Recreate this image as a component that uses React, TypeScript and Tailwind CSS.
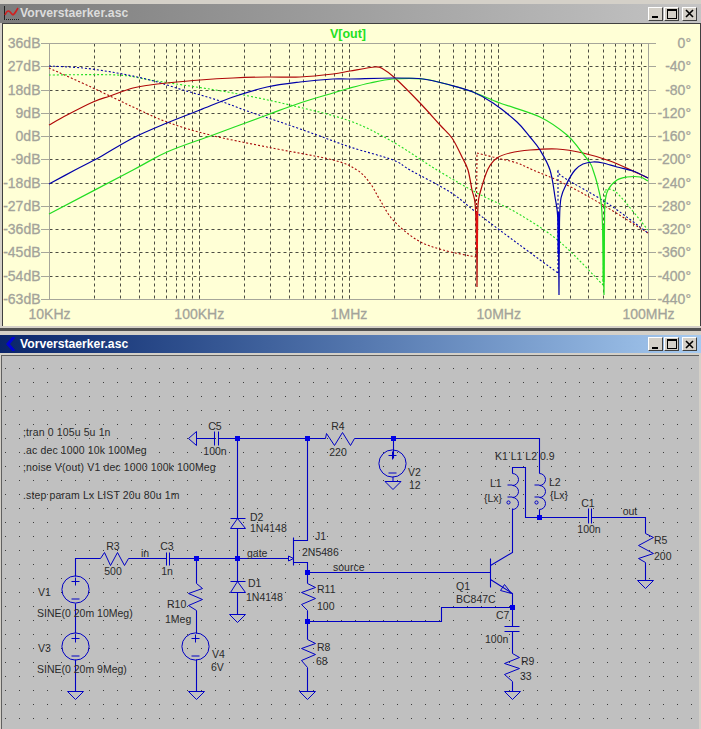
import type { ReactNode } from "react";

const FONT = "'Liberation Sans', Arial, sans-serif";

const DB_LABELS = ["36dB", "27dB", "18dB", "9dB", "0dB", "-9dB", "-18dB", "-27dB", "-36dB", "-45dB", "-54dB", "-63dB"];
const DEG_LABELS = ["0°", "-40°", "-80°", "-120°", "-160°", "-200°", "-240°", "-280°", "-320°", "-360°", "-400°", "-440°"];
const FREQ_LABELS = ["10KHz", "100KHz", "1MHz", "10MHz", "100MHz"];

const PLOT_L = 49.5;
const PLOT_R = 648.5;
const PLOT_T = 43.5;
const PLOT_B = 299.5;
const ROW = (PLOT_B - PLOT_T) / 11;
const DECADE = (PLOT_R - PLOT_L) / 4;

const gridX: number[] = [];
for (let d = 0; d < 4; d++) {
  for (let k = 1; k <= 10; k++) {
    if (k === 1 && d === 0) continue;
    gridX.push(Math.floor(PLOT_L + DECADE * (d + Math.log10(k))) + 0.5);
  }
}

const RED_MAG = "49,125 67,115 93,102 110,96 133,88 150,85 167,83 200,80 233,78 267,77 300,77 333,74 350,71 375,67 383,69 395,78 420,103 440,125 452,138 462,157 468,170 472,190 475,203 476.5,235 477,287 | 477,287 477.5,235 478,205 480,193 488,169 497,158 510,153 530,150 557,149 583,153 610,161 633,171 648,178";
const BLUE_MAG = "49,184 75,170 100,157 133,138 167,123 200,110 233,97 267,87 300,82 333,79 350,79 393,78 423,79 450,85 473,92 493,103 517,122 530,137 540,150 550,170 555,197 558,222 559,295 | 559,295 559.5,222 561,198 567,183 575,170 583,164 593,162 603,163 617,167 633,171 648,178";
const GREEN_MAG = "49,214 133,170 167,152 213,135 267,115 300,103 333,93 350,88 370,83 393,79 423,79 450,85 473,92 500,103 540,117 567,135 580,150 590,163 593,170 598,187 602,213 604,295 | 604,295 604.5,225 605,203 608,190 617,180 627,177 640,177 648,181";
const RED_PH = "49,68 93,88 133,107 167,122 210,135 267,147 333,160 357,170 370,183 380,200 393,220 417,240 443,250 476,257 | 476,257 477,153 | 477,153 493,157 517,163 533,170 563,183 603,205 648,233";
const BLUE_PH = "49,66 83,68 117,73 150,80 183,90 217,100 250,112 283,123 317,135 350,147 393,160 410,170 450,192 477,213 517,243 558,273 | 558,273 558,170 | 558,170 563,177 607,203 648,233";
const GREEN_PH = "49,75 117,75 150,80 183,85 233,93 290,105 350,121 393,142 437,170 477,193 517,213 560,242 603,285 | 603,285 605,190 | 605,190 617,193 648,230";

// smooth the hand-read samples; " | " marks a corner where the curve must stay sharp
function curve(points: string) {
  return points
    .split(" | ")
    .map((seg) => {
      const p = seg.split(" ").map((s) => s.split(",").map(Number));
      let d = `M${p[0][0]} ${p[0][1]}`;
      for (let i = 0; i < p.length - 1; i++) {
        const a = p[Math.max(i - 1, 0)];
        const b = p[i];
        const c = p[i + 1];
        const e = p[Math.min(i + 2, p.length - 1)];
        d += `C${b[0] + (c[0] - a[0]) / 6} ${b[1] + (c[1] - a[1]) / 6} ${c[0] - (e[0] - b[0]) / 6} ${c[1] - (e[1] - b[1]) / 6} ${c[0]} ${c[1]}`;
      }
      return d;
    })
    .join("");
}

function Plot() {
  return (
    <svg className="block h-[302px] w-[697px]" viewBox="3 24 697 302" style={{ fontFamily: FONT }}>
      <rect x="3" y="24" width="697" height="302" fill="#ffffd6" />
      {DB_LABELS.map((_, i) =>
        i > 0 && i < 11 ? (
          <line key={i} x1={PLOT_L} x2={PLOT_R} y1={Math.floor(PLOT_T + i * ROW) + 0.5} y2={Math.floor(PLOT_T + i * ROW) + 0.5} stroke="#4c4c42" strokeDasharray="3 3" />
        ) : null
      )}
      {gridX.slice(0, -1).map((x) => (
        <line key={x} x1={x} x2={x} y1={PLOT_T} y2={PLOT_B} stroke="#4c4c42" strokeDasharray="3 3" />
      ))}
      <rect x={PLOT_L} y={PLOT_T} width={PLOT_R - PLOT_L} height={PLOT_B - PLOT_T} fill="none" stroke="#a6a69a" />
      {DB_LABELS.map((t, i) => {
        const y = Math.floor(PLOT_T + i * ROW) + 0.5;
        return (
          <g key={t}>
            <line x1="41" x2={PLOT_L} y1={y} y2={y} stroke="#a6a69a" />
            <line x1={PLOT_R} x2="656" y1={y} y2={y} stroke="#a6a69a" />
            <text x="40.5" y={y + 4} textAnchor="end" fontSize="14" fill="#a3a39a" stroke="#a3a39a" strokeWidth="0.3">{t}</text>
            <text x="691" y={y + 4} textAnchor="end" fontSize="14" fill="#a3a39a" stroke="#a3a39a" strokeWidth="0.3">{DEG_LABELS[i]}</text>
          </g>
        );
      })}
      {FREQ_LABELS.map((t, i) => (
        <text key={t} x={PLOT_L + i * DECADE} y="319" textAnchor="middle" fontSize="14" fill="#a3a39a" stroke="#a3a39a" strokeWidth="0.3">{t}</text>
      ))}
      <text x="348" y="38" textAnchor="middle" fontSize="12.5" fontWeight="700" fill="#22e022">V[out]</text>

      <g fill="none" strokeLinejoin="round">
        <path d={curve(RED_PH)} stroke="#a80808" strokeWidth="1.1" strokeDasharray="2 2" />
        <path d={curve(GREEN_PH)} stroke="#22dd22" strokeWidth="1.1" strokeDasharray="2 2" />
        <path d={curve(BLUE_PH)} stroke="#0000a8" strokeWidth="1.1" strokeDasharray="2 2" />
        <path d={curve(RED_MAG)} stroke="#b00808" strokeWidth="1.2" />
        <path d={curve(GREEN_MAG)} stroke="#22dd22" strokeWidth="1.2" />
        <path d={curve(BLUE_MAG)} stroke="#0000a8" strokeWidth="1.2" />
        {/* the dips overlap into a heavier stroke */}
        <path d="M477 212V248" stroke="#e01010" strokeWidth="2" />
        <path d="M558.5 212V254" stroke="#0000d0" strokeWidth="2" />
        <path d="M603.5 225V282" stroke="#22e022" strokeWidth="2" />
      </g>
    </svg>
  );
}

function Gnd({ x, y }: { x: number; y: number }) {
  return <polygon points={`${x - 8},${y} ${x + 8},${y} ${x},${y + 8}`} fill="none" />;
}

function Source({ x, y }: { x: number; y: number }) {
  return (
    <g>
      <circle cx={x} cy={y} r="13.6" fill="none" />
      <path d={`M${x - 4} ${y - 8}h8M${x} ${y - 12}v8M${x - 4} ${y + 9.5}h8`} fill="none" />
    </g>
  );
}

function Coil({ x, y }: { x: number; y: number }) {
  return (
    <path
      d={`M${x} ${y}a6 6 0 0 1 6 6a6 6 0 0 1 -6 6a6 6 0 0 1 6 6a6 6 0 0 1 -6 6a6 6 0 0 1 6 6a6 6 0 0 1 -6 6M${x - 5} ${y + 11.5}h5M${x - 5} ${y + 23.5}h5`}
      fill="none"
    />
  );
}

const RESISTORS = [
  "100,558 104,552 110,565 117,552 124,565 128,558",
  "325,438 326,433 334,445 342,432 350,445 354,438",
  "196,583 202,588 188,593 202,599 188,605 196,610",
  "307,583 315,587 301,592 315,598 301,604 307,610",
  "307,639 315,643 301,648 315,654 301,660 307,667",
  "512,653 519,657 504,663 519,668 504,674 512,681",
  "645,533 653,537 638,545 653,553 638,558 645,562",
];

const WIRES = [
  // top rail and the flag at the C5 end
  "M196 438H214M218 438H325M354 438H539V473",
  "M393 438V458",
  "M237 438V518M237 528V581M237 592V614",
  "M307 438V540H293M293 537V565M293 562H307V583",
  // input side
  "M75 576V558H100M128 558H166M169 558H293M196 558V583M196 610V633M196 659V691",
  "M75 603V633M75 659V691",
  // source and feedback
  "M307 572H490M307 610V639M307 667V691M307 621H441V607H512",
  // transistor, coils, output
  "M490 558V587M490 565L512 552V508M490 579L512 593V626M512 631V653M512 681V691",
  "M512 473V467H525V517H587M591 517H645V533M645 562V580",
  "M539 509V517",
];

const JUNCTIONS: [number, number][] = [[237, 438], [307, 438], [393, 438], [196, 558], [237, 558], [307, 572], [307, 621], [512, 607], [539, 517]];

const DIRECTIVES: [string, number][] = [
  [";tran 0 105u 5u 1n", 432],
  [".ac dec 1000 10k 100Meg", 450],
  [";noise V(out) V1 dec 1000 100k 100Meg", 467],
  [".step param Lx LIST 20u 80u 1m", 495],
];

const LEFT_LABELS: [string, number, number][] = [
  ["V1", 38, 592],
  ["SINE(0 20m 10Meg)", 37, 613],
  ["V3", 38, 648],
  ["SINE(0 20m 9Meg)", 37, 669],
  ["R10", 167, 604],
  ["1Meg", 165, 619],
  ["V4", 212, 654],
  ["6V", 211, 667],
  ["D2", 250, 517],
  ["1N4148", 250, 528],
  ["D1", 248, 583],
  ["1N4148", 246, 597],
  ["J1", 315, 536],
  ["2N5486", 302, 552],
  ["gate", 247, 553],
  ["source", 333, 567],
  ["V2", 408, 472],
  ["12", 409, 485],
  ["R11", 317, 589],
  ["100", 317, 606],
  ["R8", 317, 647],
  ["68", 316, 661],
  ["Q1", 456, 586],
  ["BC847C", 456, 599],
  ["C7", 496, 615],
  ["100n", 485, 639],
  ["R9", 521, 661],
  ["33", 520, 676],
  ["K1 L1 L2 0.9", 495, 456],
  ["L1", 490, 483],
  ["{Lx}", 484, 498],
  ["L2", 549, 482],
  ["{Lx}", 550, 495],
  ["R5", 654, 540],
  ["200", 654, 556],
];

const CENTER_LABELS: [string, number, number][] = [
  ["C5", 215, 426],
  ["100n", 215, 451],
  ["R4", 338, 426],
  ["220", 338, 452],
  ["R3", 113, 546],
  ["500", 113, 571],
  ["in", 145, 553],
  ["C3", 167, 546],
  ["1n", 167, 571],
  ["C1", 588, 503],
  ["100n", 589, 529],
  ["out", 630, 511],
];

function Schematic() {
  return (
    <svg className="block h-[373px] w-[697px]" viewBox="2 356 697 373" style={{ fontFamily: FONT }}>
      <defs>
        <pattern id="dots" x="5" y="410" width="14" height="14" patternUnits="userSpaceOnUse">
          <rect width="1" height="1" fill="#3c3c3c" />
        </pattern>
      </defs>
      <rect x="2" y="356" width="697" height="373" fill="#c0c0c0" />
      <rect x="2" y="356" width="697" height="373" fill="url(#dots)" />

      <g stroke="#0000c4" strokeWidth="1.1" fill="none" transform="translate(0.5 0.5)">
        {WIRES.map((d) => (
          <path key={d} d={d} />
        ))}
        {RESISTORS.map((p) => (
          <polyline key={p} points={p} strokeWidth="1" />
        ))}
        <g strokeWidth="1">
          {/* capacitors */}
          <path d="M214 431V445M218 431V445M166 552V565M169 552V565M588 508V523M591 508V523M504 626H519M504 631H519" />
          {/* C5 flag */}
          <polygon points="188,438 196,431 196,445" />
          <Gnd x={75} y={691} />
          <Gnd x={196} y={691} />
          <Gnd x={237} y={614} />
          <Gnd x={307} y={691} />
          <Gnd x={512} y={691} />
          <Gnd x={645} y={580} />
          <Gnd x={392.5} y={481} />
          <path d="M392.5 476V481" />
          <Source x={75} y={589} />
          <Source x={75} y={646} />
          <Source x={195} y={646} />
          <Source x={392} y={463} />
          {/* diodes */}
          <path d="M230 518H245M237 518L230 528H245ZM230 581H245M237 581L230 592H245Z" />
          {/* gate and emitter arrows */}
          <polygon points="293,558 288,555.5 288,560.5" fill="#c0c0c0" />
          <polygon points="511,593 500,590 504,584" />
          <Coil x={512} y={473} />
          <Coil x={539} y={473} />
          <circle cx="508" cy="502" r="1.6" />
          <circle cx="536" cy="502" r="1.6" />
        </g>
      </g>
      {JUNCTIONS.map(([x, y]) => (
        <rect key={`${x}-${y}`} x={x - 2} y={y - 2} width="5" height="5" fill="#0000e6" />
      ))}
      <g fontSize="10.5" fill="#2a2a2a">
        {DIRECTIVES.map(([t, y]) => (
          <text key={t} x={23} y={y + 4} letterSpacing="0.13">{t}</text>
        ))}
        {LEFT_LABELS.map(([t, x, y]) => (
          <text key={`${t}-${x}-${y}`} x={x} y={y + 4}>{t}</text>
        ))}
        {CENTER_LABELS.map(([t, x, y]) => (
          <text key={`${t}-${x}-${y}`} x={x} y={y + 4} textAnchor="middle">{t}</text>
        ))}
      </g>
    </svg>
  );
}

function WaveIcon() {
  return (
    <svg className="h-[15px] w-[15px] shrink-0" viewBox="0 0 15 15">
      <path d="M0.5 0V13" stroke="#222" />
      <path d="M0 13.5H15" stroke="#222" strokeDasharray="1 1" />
      <path d="M1 9C3 4 5 4 7 7S10 9 14 2" stroke="#d02020" strokeWidth="1.6" fill="none" />
    </svg>
  );
}

function SchematicIcon() {
  return (
    <svg className="h-[14px] w-[12px] shrink-0" viewBox="0 0 12 14">
      <path d="M9 0L3 7L9 14" stroke="#0000d8" strokeWidth="3" fill="none" />
    </svg>
  );
}

function WinButton({ children }: { children: ReactNode }) {
  return (
    <div className="flex h-[14px] w-[15px] items-center justify-center border border-t-white border-l-white border-r-[#404040] border-b-[#404040] bg-[#d4d0c8]">
      {children}
    </div>
  );
}

function WinButtons() {
  return (
    <div className="ml-auto mr-[4px] flex gap-[1px]">
      <WinButton>
        <div className="mt-[7px] mr-[2px] h-[2px] w-[6px] bg-black" />
      </WinButton>
      <WinButton>
        <div className="h-[10px] w-[10px] border border-t-2 border-black" />
      </WinButton>
      <div className="ml-[2px]">
        <WinButton>
          <svg className="h-[9px] w-[9px]" viewBox="0 0 9 9">
            <path d="M1 1L8 8M8 1L1 8" stroke="#000" strokeWidth="1.6" />
          </svg>
        </WinButton>
      </div>
    </div>
  );
}

function TitleBar({ active }: { active: boolean }) {
  return (
    <div
      className={
        active
          ? "flex h-[18px] items-center bg-gradient-to-r from-[#0a246a] to-[#a6caf0] pl-[5px]"
          : "flex h-[19px] items-center bg-gradient-to-r from-[#7c7c7c] to-[#c4c4c4] pl-[4px]"
      }
    >
      {active ? <SchematicIcon /> : <WaveIcon />}
      <span className={active ? "ml-[3px] text-[12.2px] font-bold text-white" : "ml-[1px] text-[12.2px] font-bold text-[#dcdcdc]"} style={{ fontFamily: FONT }}>
        Vorverstaerker.asc
      </span>
      <WinButtons />
    </div>
  );
}

export default function App() {
  return (
    <div className="flex h-[729px] w-[701px] flex-col overflow-hidden bg-[#d4d0c8]">
      <div className="flex flex-col pt-[4px]">
        <TitleBar active={false} />
        <div className="mx-[2px] w-fit border-x border-t border-[#404040]">
          <Plot />
        </div>
        <div className="mt-[2px] h-[3px] bg-[#505050]" />
      </div>
      <div className="mt-[4px] flex flex-col">
        <TitleBar active />
        <div className="mt-[2px] ml-[1px] w-fit border-t border-l border-[#606060]">
          <Schematic />
        </div>
      </div>
    </div>
  );
}
